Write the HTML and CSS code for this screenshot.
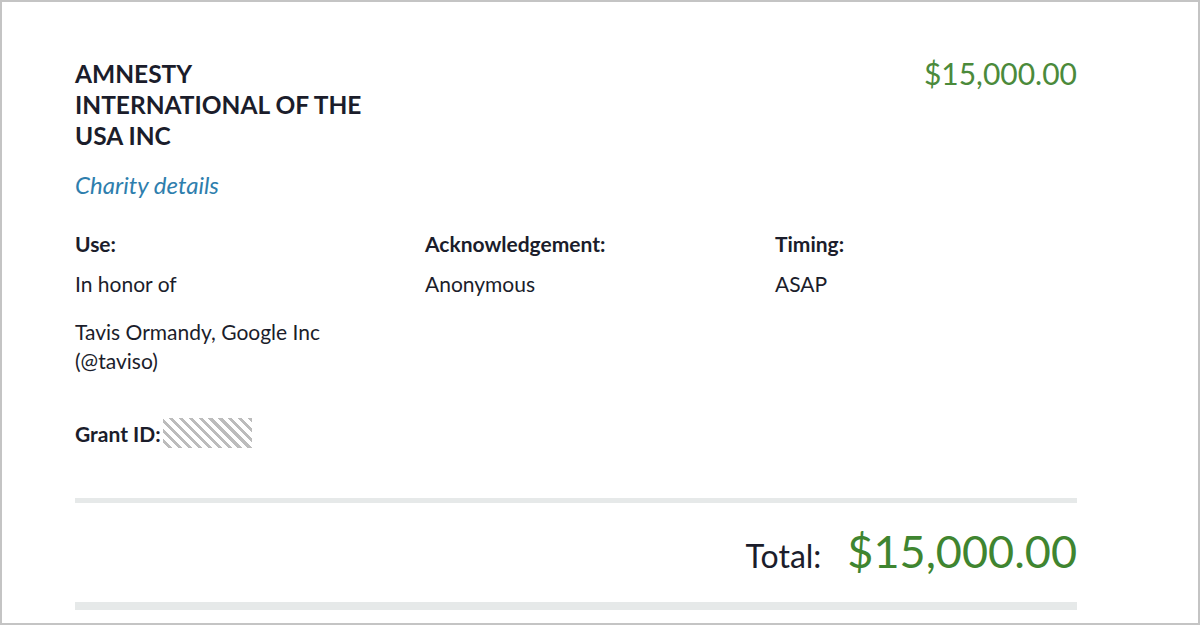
FILE: index.html
```html
<!DOCTYPE html>
<html>
<head>
<meta charset="utf-8">
<link rel="stylesheet" href="styles.css">
</head>
<body>
<div class="frame">
  <div class="content">
    <div class="grant">
      <div class="grant-head">
        <div class="charity">
          <h2 class="charity-name">AMNESTY INTERNATIONAL OF THE USA INC</h2>
          <a class="charity-link" href="#">Charity details</a>
        </div>
        <div class="amount">$15,000.00</div>
      </div>
      <div class="details">
        <div class="col">
          <div class="label">Use:</div>
          <div class="value">In honor of</div>
          <div class="value honoree">Tavis Ormandy, Google Inc (@taviso)</div>
        </div>
        <div class="col">
          <div class="label">Acknowledgement:</div>
          <div class="value">Anonymous</div>
        </div>
        <div class="col">
          <div class="label">Timing:</div>
          <div class="value">ASAP</div>
        </div>
      </div>
      <div class="grant-id"><span class="label">Grant ID:</span><span class="redacted"></span></div>
    </div>
    <div class="rule"></div>
    <div class="total">
      <span class="total-label">Total:</span>
      <span class="total-amount">$15,000.00</span>
    </div>
    <div class="rule rule-thick"></div>
  </div>
</div>
</body>
</html>
```

FILE: styles.css
```css
html, body {
  margin: 0;
  padding: 0;
  background: #fff;
}
body {
  font-family: Lato, "Open Sans", sans-serif;
  color: #1b1d2b;
}
.frame {
  width: 1200px;
  height: 625px;
  box-sizing: border-box;
  border: 2px solid #c4c4c4;
  overflow: hidden;
}
.content {
  margin: 0 121px 0 73px;
  padding-top: 56px;
}
.grant-head {
  display: flex;
  justify-content: space-between;
  align-items: flex-start;
}
.charity-name {
  margin: 0;
  width: 295px;
  font-size: 24.5px;
  line-height: 31px;
  font-weight: 700;
  color: #1b1d2b;
}
.charity-link {
  display: block;
  margin-top: 19px;
  font-size: 24px;
  line-height: 29px;
  font-style: italic;
  color: #2e7ead;
  text-decoration: none;
}
.amount {
  font-size: 30px;
  color: #4b8a3b;
  line-height: 27px;
  margin-top: 2px;
}
.details {
  display: grid;
  grid-template-columns: 350px 350px 1fr;
  margin-top: 30px;
}
.label {
  font-size: 21px;
  font-weight: 700;
  line-height: 29px;
}
.value {
  font-size: 21px;
  line-height: 29px;
  margin-top: 11px;
}
.honoree {
  width: 270px;
  margin-top: 19px;
}
.grant-id {
  display: flex;
  align-items: center;
  height: 30px;
  margin-top: 43px;
}
.redacted {
  display: inline-block;
  width: 89px;
  height: 30px;
  margin-left: 2px;
  background: repeating-linear-gradient(45deg, #fff 0 4px, #bcbcbc 4px 7px);
}
.grant {
  padding-bottom: 50px;
}
.rule {
  height: 5px;
  background: #e6e9e9;
}
.rule-thick {
  height: 8px;
}
.total {
  display: flex;
  justify-content: flex-end;
  align-items: baseline;
  gap: 26px;
  height: 99px;
  box-sizing: border-box;
  padding-top: 26px;
}
.total-label {
  font-size: 32px;
  line-height: 1;
}
.total-amount {
  font-size: 45px;
  line-height: 1;
  color: #3f8530;
}
```
